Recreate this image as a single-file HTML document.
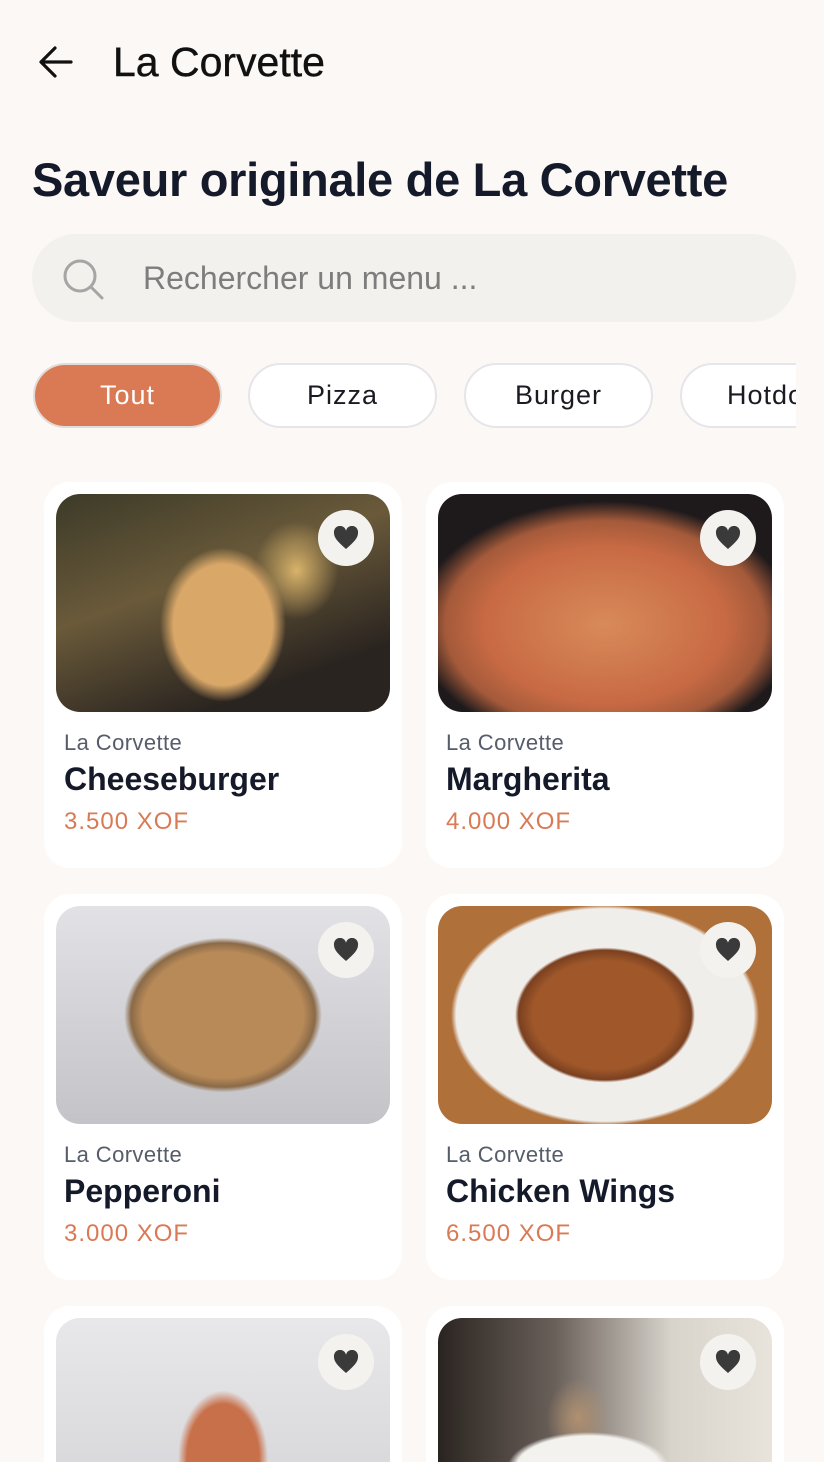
<!DOCTYPE html><html><head><meta charset="utf-8"><style>
*{margin:0;padding:0;box-sizing:border-box}
html,body{width:824px;height:1462px;overflow:hidden}
body{background:#fcf8f5;font-family:"Liberation Sans",sans-serif;position:relative}
.a{position:absolute}
.chip{position:absolute;top:363px;height:65px;width:189px;border-radius:33px;background:#fff;border:2px solid #e6e6ea;font-size:27px;color:#1a1a22;text-align:center;line-height:61px;letter-spacing:1px}
.card{position:absolute;width:358px;height:386px;background:#fff;border-radius:26px}
.img{position:absolute;left:12px;top:12px;width:334px;height:218px;border-radius:24px;overflow:hidden}
.fav{position:absolute;right:16px;top:16px;width:56px;height:56px;border-radius:50%;background:#f3f2ef;display:flex;align-items:center;justify-content:center}
.sub{position:absolute;left:20px;top:248px;font-size:22px;color:#555c6a;letter-spacing:.4px}
.name{position:absolute;left:20px;top:279px;font-size:32px;font-weight:bold;color:#141a2a}
.price{position:absolute;left:20px;top:326px;font-size:24px;color:#d97a55;letter-spacing:1px}
</style></head><body>
<svg class="a" style="left:38px;top:44px" width="36" height="36" viewBox="0 0 36 36"><path d="M33 18H4M17 4L3 18l14 14" fill="none" stroke="#111" stroke-width="3.2" stroke-linecap="round" stroke-linejoin="round"/></svg>
<div class="a" style="left:113px;top:39px;font-size:41px;color:#111;-webkit-text-stroke:.4px #111">La Corvette</div>
<div class="a" style="left:32px;top:152px;font-size:47px;font-weight:bold;color:#141a2a;letter-spacing:-.3px">Saveur originale de La Corvette</div>
<div class="a" style="left:32px;top:234px;width:764px;height:88px;border-radius:44px;background:#f2f1ee"></div>
<svg class="a" style="left:60px;top:256px" width="46" height="46" viewBox="0 0 46 46"><circle cx="20" cy="20" r="15" fill="none" stroke="#a5a5a5" stroke-width="3"/><path d="M31 31l11 11" stroke="#a5a5a5" stroke-width="3" stroke-linecap="round"/></svg>
<div class="a" style="left:143px;top:260px;font-size:32px;color:#7d7d7d">Rechercher un menu ...</div>
<div class="chip" style="left:33px;background:#d97a55;border-color:#e2dcd8;color:#fff">Tout</div>
<div class="chip" style="left:248px">Pizza</div>
<div class="chip" style="left:464px">Burger</div>
<div style="position:absolute;left:680px;top:360px;width:116px;height:72px;overflow:hidden"><div class="chip" style="left:0;top:3px;text-align:left;padding-left:45px">Hotdog</div></div>

<div class="card" style="left:44px;top:482px"><div class="img" style="background:radial-gradient(ellipse 90px 110px at 50% 60%,#d9a768 55%,transparent 70%),radial-gradient(ellipse 60px 70px at 72% 35%,#d8b36a,transparent 70%),linear-gradient(160deg,#3c3a28,#6a5a3a 40%,#2a2420 80%)"><div class="fav"><svg width="26" height="24" viewBox="0 0 26 24"><path d="M13 23C5 16 1 12 1 7a6 6 0 0 1 12-2 6 6 0 0 1 12 2c0 5-4 9-12 16z" fill="#3a3a3a"/></svg></div></div><div class="sub">La Corvette</div><div class="name">Cheeseburger</div><div class="price">3.500 XOF</div></div>

<div class="card" style="left:426px;top:482px"><div class="img" style="background:radial-gradient(ellipse 200px 130px at 50% 60%,#d88a5a,#c86a44 60%,#a45a3a 80%,#1e1a1c 95%)"><div class="fav"><svg width="26" height="24" viewBox="0 0 26 24"><path d="M13 23C5 16 1 12 1 7a6 6 0 0 1 12-2 6 6 0 0 1 12 2c0 5-4 9-12 16z" fill="#3a3a3a"/></svg></div></div><div class="sub">La Corvette</div><div class="name">Margherita</div><div class="price">4.000 XOF</div></div>

<div class="card" style="left:44px;top:894px"><div class="img" style="background:radial-gradient(ellipse 115px 90px at 50% 50%,#b88a58 70%,#8a6a48 80%,transparent 86%),linear-gradient(#e2e2e6,#c4c4c8)"><div class="fav"><svg width="26" height="24" viewBox="0 0 26 24"><path d="M13 23C5 16 1 12 1 7a6 6 0 0 1 12-2 6 6 0 0 1 12 2c0 5-4 9-12 16z" fill="#3a3a3a"/></svg></div></div><div class="sub">La Corvette</div><div class="name">Pepperoni</div><div class="price">3.000 XOF</div></div>

<div class="card" style="left:426px;top:894px"><div class="img" style="background:radial-gradient(ellipse 120px 90px at 50% 50%,#a0582a 60%,#7a4020 72%,transparent 75%),radial-gradient(ellipse 175px 125px at 50% 50%,#f0eeea 85%,transparent 88%),#b0703a"><div class="fav"><svg width="26" height="24" viewBox="0 0 26 24"><path d="M13 23C5 16 1 12 1 7a6 6 0 0 1 12-2 6 6 0 0 1 12 2c0 5-4 9-12 16z" fill="#3a3a3a"/></svg></div></div><div class="sub">La Corvette</div><div class="name">Chicken Wings</div><div class="price">6.500 XOF</div></div>

<div class="card" style="left:44px;top:1306px;height:156px;border-radius:26px 26px 0 0;overflow:hidden"><div class="img" style="height:200px;background:radial-gradient(ellipse 60px 90px at 50% 70%,#c8704a 60%,transparent 75%),linear-gradient(#e8e8ea,#d4d4d8)"><div class="fav"><svg width="26" height="24" viewBox="0 0 26 24"><path d="M13 23C5 16 1 12 1 7a6 6 0 0 1 12-2 6 6 0 0 1 12 2c0 5-4 9-12 16z" fill="#3a3a3a"/></svg></div></div></div>

<div class="card" style="left:426px;top:1306px;height:156px;border-radius:26px 26px 0 0;overflow:hidden"><div class="img" style="height:200px;background:radial-gradient(ellipse 90px 40px at 45% 75%,#f4f2ee 80%,transparent 90%),radial-gradient(ellipse 40px 50px at 42% 50%,#b09070,transparent 80%),linear-gradient(90deg,#2a2420,#6a605a 35%,#d8d4cc 70%,#e8e4dc)"><div class="fav"><svg width="26" height="24" viewBox="0 0 26 24"><path d="M13 23C5 16 1 12 1 7a6 6 0 0 1 12-2 6 6 0 0 1 12 2c0 5-4 9-12 16z" fill="#3a3a3a"/></svg></div></div></div>
</body></html>
